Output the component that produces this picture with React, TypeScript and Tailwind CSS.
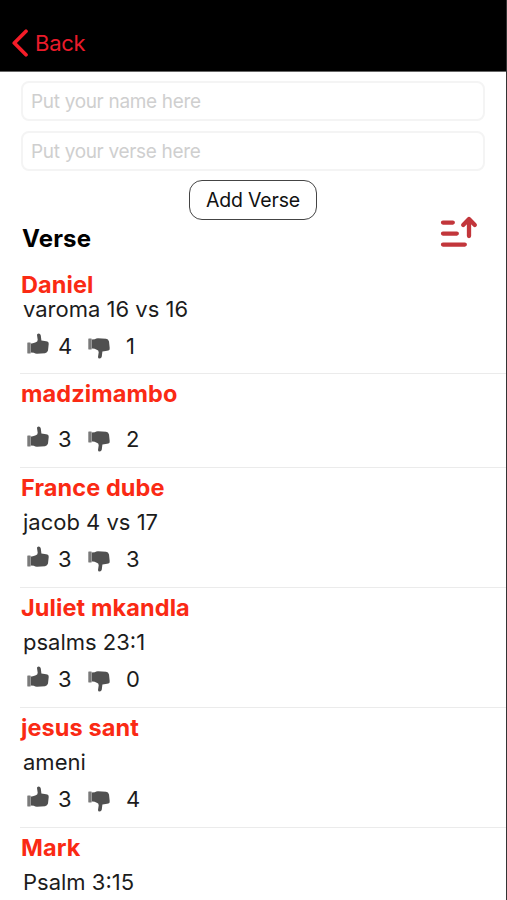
import { clsx } from "clsx";

type Verse = {
  name: string;
  text?: string;
  likes: number;
  dislikes: number;
  compact?: boolean;
};

const verses: Verse[] = [
  { name: "Daniel", text: "varoma 16 vs 16", likes: 4, dislikes: 1, compact: true },
  { name: "madzimambo", likes: 3, dislikes: 2 },
  { name: "France dube", text: "jacob 4 vs 17", likes: 3, dislikes: 3 },
  { name: "Juliet mkandla", text: "psalms 23:1", likes: 3, dislikes: 0 },
  { name: "jesus sant", text: "ameni", likes: 3, dislikes: 4 },
  { name: "Mark", text: "Psalm 3:15", likes: 3, dislikes: 1 },
];

function ThumbIcon({ down = false }: { down?: boolean }) {
  return (
    <svg
      viewBox="0 0 22 22"
      className={clsx("h-[22px] w-[22px] shrink-0", down && "-scale-y-100")}
      fill="#505050"
    >
      <rect x="0.3" y="9.6" width="3.4" height="10.9" rx="0.4" fill="#7a7a7a" />
      <path d="M3.9 10.4 Q6.5 10.6 8.2 9.6 Q10.9 8.8 10.7 6.8 L10 2 Q9.9 0.5 11.6 0.5 Q13.4 0.5 13.8 2.5 L14.4 7.4 Q18 7.8 20.4 8.4 Q22 8.9 21.7 11 L21 17.6 Q20.4 19.8 18 20.2 L10 20.8 Q8.2 20.8 6.8 19.8 L3.9 19.4 Z" />
    </svg>
  );
}

function SortIcon() {
  return (
    <svg
      viewBox="0 0 38 34"
      className="h-[34px] w-[38px]"
      fill="none"
      stroke="#c2363b"
      strokeWidth="4.3"
      strokeLinecap="round"
      strokeLinejoin="round"
    >
      <path d="M3 8.6H12.8M3 19.6H16.8M3 30.6H24.8M29 22V5.2M23.2 11L29 5L34.8 11" />
    </svg>
  );
}

function VerseRow({ verse }: { verse: Verse }) {
  return (
    <li
      className={clsx(
        "ml-5 shrink-0 border-b border-[#ebebeb]",
        verse.compact ? "h-[108px]" : verse.text ? "h-[120px]" : "h-[94px]"
      )}
    >
      <h2
        className={clsx(
          "flex h-6 items-center pl-px text-[23.5px] leading-6 font-bold tracking-[0.1px] text-[#fa2a14]",
          verse.compact ? "mt-[7px]" : "mt-2"
        )}
      >
        {verse.name}
      </h2>
      {verse.text && (
        <p
          className={clsx(
            "pl-[3px] text-[22px] leading-6 text-[#1c1c1c]",
            !verse.compact && "mt-[10px]"
          )}
        >
          {verse.text}
        </p>
      )}
      <div
        className={clsx(
          "flex h-6 items-center pl-[7px] text-[22px] text-[#1c1c1c]",
          verse.text ? "mt-[13px]" : "mt-[21px]"
        )}
      >
        <div className="-mt-1 flex">
          <ThumbIcon />
        </div>
        <span className="ml-[9px] w-[30px]">{verse.likes}</span>
        <div className="mt-1 flex">
          <ThumbIcon down />
        </div>
        <span className="ml-4">{verse.dislikes}</span>
      </div>
    </li>
  );
}

function Field({ placeholder }: { placeholder: string }) {
  return (
    <input
      type="text"
      placeholder={placeholder}
      className="h-10 w-full rounded-lg border-2 border-[#f4f4f4] bg-white px-2 text-[19px] tracking-[-0.32px] placeholder:text-[#cfcfcf]"
    />
  );
}

export default function App() {
  return (
    <div className="flex h-[900px] w-[507px] flex-col overflow-hidden border-r border-[#333] bg-white font-['Inter','Liberation_Sans',sans-serif] text-black">
      <header className="-mr-px flex h-[72px] shrink-0 border-b border-[#666] bg-black">
        <button className="mt-[29px] ml-3 flex h-7 items-center gap-[7px] text-[22px] tracking-[-0.25px] text-[#eb1b2a]">
          <svg
            viewBox="0 0 16 28"
            className="h-7 w-4"
            fill="none"
            stroke="#f51c28"
            strokeWidth="3.7"
            strokeLinecap="round"
            strokeLinejoin="round"
          >
            <path d="M14 2.3L2.3 14L14 25.7" />
          </svg>
          Back
        </button>
      </header>

      <div className="mt-[9px] flex shrink-0 flex-col items-center gap-2.5 px-[21px]">
        <Field placeholder="Put your name here" />
        <Field placeholder="Put your verse here" />
        <button className="-mt-px h-10 w-32 rounded-[13px] border-[1.5px] border-[#444] pt-0.5 text-[19.5px] tracking-[-0.2px] text-[#111]">
          Add Verse
        </button>
      </div>

      <div className="flex h-[46px] shrink-0 justify-between pr-[28px] pl-[22px]">
        <h1 className="mt-[3px] text-2xl leading-8 font-bold tracking-[0.2px]">Verse</h1>
        <button className="-mt-1.5 h-[34px]">
          <SortIcon />
        </button>
      </div>

      <ul className="flex flex-col">
        {verses.map((verse) => (
          <VerseRow key={verse.name} verse={verse} />
        ))}
      </ul>
    </div>
  );
}
